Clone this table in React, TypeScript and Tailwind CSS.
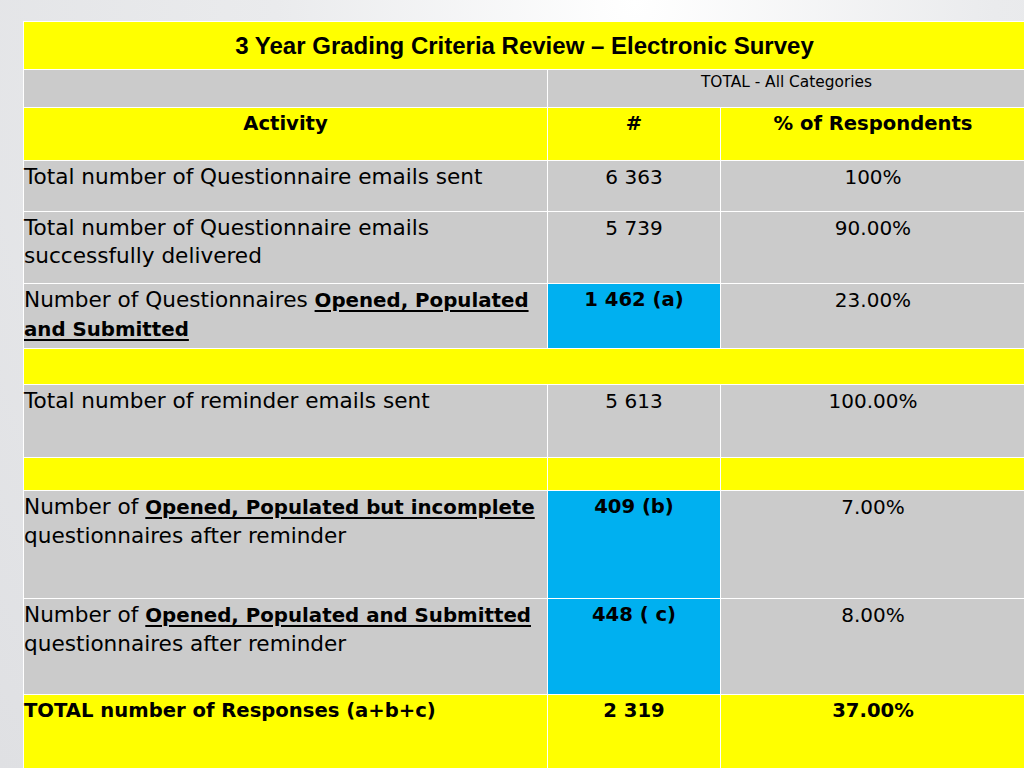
const cell = 'bg-[#cbcbcb] pt-[2px] leading-[28px]'
const yellow = 'bg-[#ffff00] pt-[2px] leading-[28px]'
const blue = 'bg-[#00b0f0] pt-[2px] leading-[28px]'

function Ul({ children }: { children: React.ReactNode }) {
  return <span className="font-bold text-[19.8px] underline underline-offset-[3px] decoration-[1.5px]">{children}</span>
}

export default function App() {
  return (
    <div className="h-[768px] w-[1024px] overflow-hidden bg-[radial-gradient(ellipse_at_62%_0%,#ffffff_0%,#eaebed_40%,#dfe0e3_100%)] pl-[23px] pt-[21px] text-black [font-family:'DejaVu_Sans',sans-serif]">
      <div
        className="grid w-[1003px] gap-px bg-white p-px text-[21.6px]"
        style={{
          gridTemplateColumns: '523px 172px 304px',
          gridTemplateRows: '47px 37px 52px 50px 71px 64px 35px 72px 32px 107px 95px 80px',
        }}
      >
        {/* title */}
        <div className="col-span-3 flex items-center justify-center bg-[#ffff00] text-[24px] font-bold [font-family:'Liberation_Sans',Arial,sans-serif]">
          3 Year Grading Criteria Review – Electronic Survey
        </div>

        {/* sub header */}
        <div className="bg-[#cbcbcb]" />
        <div className="col-span-2 bg-[#cbcbcb] pt-[2px] text-center text-[15.4px] leading-[20px]">
          TOTAL - All Categories
        </div>

        {/* column headers */}
        <div className={`${yellow} text-center text-[19.6px] font-bold`}>Activity</div>
        <div className={`${yellow} text-center text-[19.6px] font-bold`}>#</div>
        <div className={`${yellow} text-center text-[19.6px] font-bold`}>% of Respondents</div>

        <div className={`${cell} whitespace-nowrap`}>Total number of Questionnaire emails sent</div>
        <div className={`${cell} text-center text-[20px]`}>6 363</div>
        <div className={`${cell} text-center text-[20px]`}>100%</div>

        <div className={`${cell} whitespace-nowrap`}>
          Total number of Questionnaire emails
          <br />
          successfully delivered
        </div>
        <div className={`${cell} text-center text-[20px]`}>5 739</div>
        <div className={`${cell} text-center text-[20px]`}>90.00%</div>

        <div className={`${cell} whitespace-nowrap`}>
          Number of Questionnaires <Ul>Opened, Populated</Ul>
          <br />
          <Ul>and Submitted</Ul>
        </div>
        <div className={`${blue} text-center text-[19.6px] font-bold`}>1 462 (a)</div>
        <div className={`${cell} text-center text-[20px]`}>23.00%</div>

        <div className="col-span-3 bg-[#ffff00]" />

        <div className={`${cell} whitespace-nowrap`}>Total number of reminder emails sent</div>
        <div className={`${cell} text-center text-[20px]`}>5 613</div>
        <div className={`${cell} text-center text-[20px]`}>100.00%</div>

        <div className="bg-[#ffff00]" />
        <div className="bg-[#ffff00]" />
        <div className="bg-[#ffff00]" />

        <div className={`${cell} whitespace-nowrap`}>
          Number of <Ul>Opened, Populated but incomplete</Ul>
          <br />
          questionnaires after reminder
        </div>
        <div className={`${blue} text-center text-[19.6px] font-bold`}>409 (b)</div>
        <div className={`${cell} text-center text-[20px]`}>7.00%</div>

        <div className={`${cell} whitespace-nowrap`}>
          Number of <Ul>Opened, Populated and Submitted</Ul>
          <br />
          questionnaires after reminder
        </div>
        <div className={`${blue} text-center text-[19.6px] font-bold`}>448 ( c)</div>
        <div className={`${cell} text-center text-[20px]`}>8.00%</div>

        <div className={`${yellow} whitespace-nowrap text-[19.6px] font-bold`}>TOTAL number of Responses (a+b+c)</div>
        <div className={`${yellow} text-center text-[19.6px] font-bold`}>2 319</div>
        <div className={`${yellow} text-center text-[19.6px] font-bold`}>37.00%</div>
      </div>
    </div>
  )
}
